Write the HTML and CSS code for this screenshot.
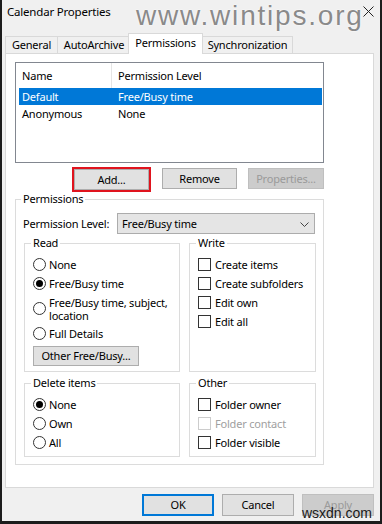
FILE: index.html
```html
<!DOCTYPE html>
<html>
<head>
<meta charset="utf-8">
<link rel="stylesheet" href="styles.css">
</head>
<body>
<div class="window">
  <div class="titlebar">
    <span class="title">Calendar Properties</span>
    <div class="wm-top">www.wintips.org</div>
    <svg class="close" width="11" height="11" viewBox="0 0 11 11"><path d="M0.5 0.5L10.5 10.5M10.5 0.5L0.5 10.5" stroke="#222" stroke-width="1" fill="none"/></svg>
  </div>
  <div class="tabs">
    <div class="tab t-general">General</div>
    <div class="tab t-auto">AutoArchive</div>
    <div class="tab sel t-perm">Permissions</div>
    <div class="tab t-sync">Synchronization</div>
  </div>
  <div class="panel">
    <div class="list">
      <div class="lhead"><span class="c1">Name</span><span class="c2">Permission Level</span></div>
      <div class="lrow selrow"><span class="c1">Default</span><span class="c2">Free/Busy time</span></div>
      <div class="lrow"><span class="c1">Anonymous</span><span class="c2">None</span></div>
    </div>
    <div class="btnrow">
      <div class="btn add">Add...</div>
      <div class="btn rem">Remove</div>
      <div class="btn props disabled">Properties...</div>
    </div>
    <fieldset class="perm">
      <legend>Permissions</legend>
      <div class="levelrow">
        <span class="lvl">Permission Level:</span>
        <div class="select"><span>Free/Busy time</span>
          <svg width="9" height="5" viewBox="0 0 9 5"><path d="M0.5 0.5L4.5 4.5L8.5 0.5" stroke="#444" stroke-width="1" fill="none"/></svg>
        </div>
      </div>
      <div class="grid">
        <fieldset class="sub read">
          <legend>Read</legend>
          <div class="opt"><span class="radio"></span><span>None</span></div>
          <div class="opt"><span class="radio on"></span><span>Free/Busy time</span></div>
          <div class="opt two"><span class="radio"></span><span class="twotext"><span>Free/Busy time, subject,</span><span>location</span></span></div>
          <div class="opt"><span class="radio"></span><span>Full Details</span></div>
          <div class="btn other">Other Free/Busy...</div>
        </fieldset>
        <fieldset class="sub write">
          <legend>Write</legend>
          <div class="opt"><span class="check"></span><span>Create items</span></div>
          <div class="opt"><span class="check"></span><span>Create subfolders</span></div>
          <div class="opt"><span class="check"></span><span>Edit own</span></div>
          <div class="opt"><span class="check"></span><span>Edit all</span></div>
        </fieldset>
        <fieldset class="sub del">
          <legend>Delete items</legend>
          <div class="opt"><span class="radio on"></span><span>None</span></div>
          <div class="opt"><span class="radio"></span><span>Own</span></div>
          <div class="opt"><span class="radio"></span><span>All</span></div>
        </fieldset>
        <fieldset class="sub other-box">
          <legend>Other</legend>
          <div class="opt"><span class="check"></span><span>Folder owner</span></div>
          <div class="opt dis"><span class="check"></span><span>Folder contact</span></div>
          <div class="opt"><span class="check"></span><span>Folder visible</span></div>
        </fieldset>
      </div>
    </fieldset>
  </div>
  <div class="footer">
    <div class="btn fbtn ok">OK</div>
    <div class="btn fbtn">Cancel</div>
    <div class="btn fbtn disabled">Apply</div>
    <div class="wm-bottom">wsxdn.com</div>
  </div>
</div>
</body>
</html>
```
FILE: styles.css
```css
* { box-sizing: border-box; }
html, body { margin: 0; padding: 0; }
body {
  width: 382px;
  height: 524px;
  background: #f0f0f0;
  font-family: "Noto Sans", "Open Sans", sans-serif;
  font-size: 11px;
  letter-spacing: -0.2px;
  color: #000;
  overflow: hidden;
}
.window {
  position: relative;
  height: 524px;
  border-left: 2px solid #1c1c1c;
  border-right: 2px solid #1c1c1c;
  border-bottom: 3px solid #1c1c1c;
  background: #f0f0f0;
  display: flex;
  flex-direction: column;
}
.titlebar {
  position: relative;
  height: 33px;
  padding: 4px 0 0 5px;
  font-size: 11.5px;
  line-height: 16px;
}
.title { display: block; }
.wm-top {
  position: absolute;
  left: 134px;
  top: -1px;
  font-family: "Liberation Sans", Arial, sans-serif;
  font-size: 28px;
  letter-spacing: 1.8px;
  color: #8a8a8a;
  text-shadow: 0 0 1px #fff, 0 0 2px #fff;
  line-height: 34px;
}
.close {
  position: absolute;
  left: 361px;
  top: 6px;
}
.tabs {
  display: flex;
  align-items: flex-end;
  height: 20px;
  padding-left: 3px;
  position: relative;
  z-index: 2;
}
.tab {
  height: 17px;
  border: 1px solid #d9d9d9;
  border-bottom: none;
  background: #f0f0f0;
  line-height: 15px;
  text-align: center;
  margin-right: -1px;
}
.t-general { width: 53px; }
.t-auto { width: 74px; }
.t-perm { width: 75px; }
.t-sync { width: 91px; }
.tab.sel {
  height: 21px;
  background: #fff;
  margin: 0 -2px -1px -2px;
  position: relative;
  z-index: 3;
  line-height: 17px;
}
.t-sync { margin-left: 1px; }
.panel {
  margin: 0 6px 0 3px;
  height: 435px;
  background: #fff;
  border: 1px solid #d9d9d9;
  display: flex;
  flex-direction: column;
  align-items: flex-start;
}
.list {
  margin: 8px 0 0 9px;
  width: 309px;
  height: 101px;
  border: 1px solid #828790;
  display: flex;
  flex-direction: column;
}
.lhead {
  height: 25px;
  display: flex;
  align-items: center;
}
.lrow {
  height: 17px;
  display: flex;
  align-items: center;
  margin: 0 1px 0 3px;
}
.lhead .c1 { width: 96px; padding-left: 6px; height: 25px; line-height: 25px; border-right: 1px solid #e5e5e5; }
.lhead .c2 { padding-left: 6px; }
.lrow .c1 { width: 99px; padding-left: 3px; }
.selrow { background: #0078d7; color: #fff; }
.btnrow {
  margin: 4px 0 0 66px;
  display: flex;
  align-items: flex-start;
}
.btn {
  width: 75px;
  height: 21px;
  background: #e1e1e1;
  border: 1px solid #adadad;
  display: flex;
  align-items: center;
  justify-content: center;
  line-height: 14px;
}
.btn.disabled { background: #cccccc; border-color: #bfbfbf; color: #9a9a9a; }
.add {
  width: 79px;
  height: 25px;
  border: 2px solid #e0141e;
  box-shadow: inset 0 0 0 1px #adadad;
}
.rem { margin: 1px 0 0 11px; }
.props { margin: 1px 0 0 11px; width: 76px; }
fieldset {
  margin: 0;
  border: 1px solid #dcdcdc;
  min-width: 0;
}
legend {
  line-height: 14px;
  padding: 0 2px;
}
.perm {
  margin: 0 0 0 9px;
  width: 309px;
  padding: 0 8px 7px 8px;
}
.perm > legend { margin-left: -3px; }
.levelrow {
  margin-top: 7px;
  display: flex;
  align-items: center;
  height: 21px;
}
.lvl { margin-left: -1px; }
.select {
  margin-left: auto;
  width: 198px;
  height: 21px;
  background: #e5e5e5;
  border: 1px solid #acacac;
  display: flex;
  align-items: center;
  justify-content: space-between;
  padding: 0 5px 0 4px;
}
.select svg { margin-top: 1px; }
.grid {
  margin-top: 2px;
  display: grid;
  grid-template-columns: 156px 127px;
  column-gap: 9px;
  row-gap: 4px;
}
.sub {
  padding: 5px 6px 5px 8px;
}
.sub > legend { margin-left: -2px; }
.read, .write { height: 136px; }
.del, .other-box { height: 81px; padding-top: 5px; }
.opt {
  height: 19px;
  display: flex;
  align-items: center;
  gap: 3px;
  white-space: nowrap;
}
.opt.two {
  height: 31px;
}
.twotext {
  display: flex;
  flex-direction: column;
  gap: 0;
  line-height: 13px;
}
.radio {
  width: 13px;
  height: 13px;
  border: 1px solid #333;
  border-radius: 50%;
  background: #fff;
  flex: none;
  display: flex;
  align-items: center;
  justify-content: center;
}
.radio.on::after {
  content: "";
  width: 7px;
  height: 7px;
  border-radius: 50%;
  background: #000;
}
.check {
  width: 13px;
  height: 13px;
  border: 1px solid #333;
  background: #fff;
  flex: none;
}
.write .opt .check, .other-box .opt .check { margin-right: 1px; }
.opt.dis { color: #a0a0a0; }
.opt.dis .check { border-color: #cccccc; }
.btn.other {
  margin-top: 3px;
  width: 106px;
  height: 20px;
}
.footer {
  position: relative;
  flex: 1;
  display: flex;
  justify-content: flex-end;
  align-items: flex-start;
  gap: 8px;
  padding: 6px 6px 0 0;
}
.fbtn { width: 72px; height: 22px; }
.ok { border: 1px solid #0078d7; box-shadow: inset 0 0 0 1px #0078d7; }
.wm-bottom {
  position: absolute;
  right: 8px;
  bottom: 0px;
  font-family: "Liberation Sans", Arial, sans-serif;
  font-size: 14px;
  letter-spacing: 0;
  color: #1a1a1a;
  line-height: 16px;
}
```
